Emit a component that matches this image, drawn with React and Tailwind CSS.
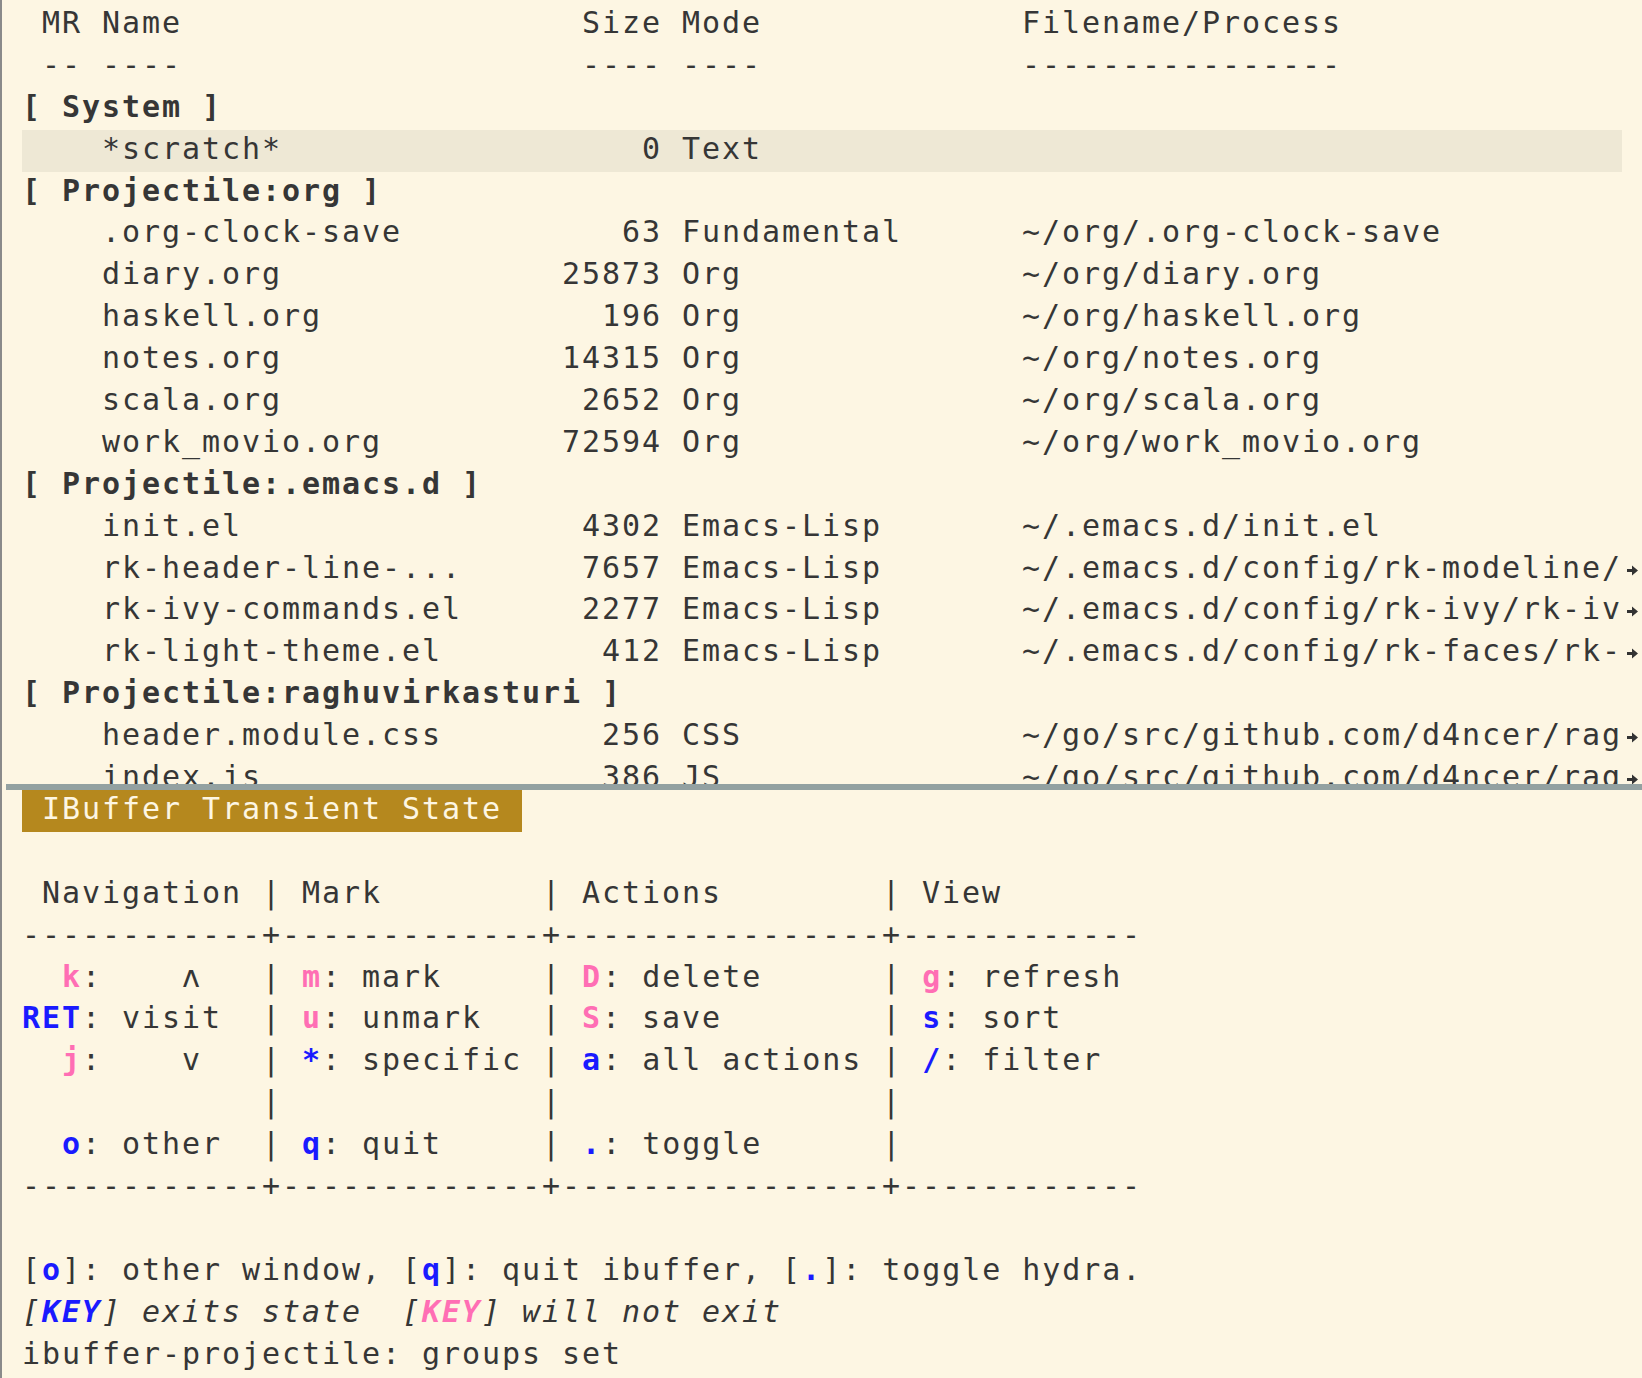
import React from 'react';

const header = ' MR Name'.padEnd(28) + 'Size ' + 'Mode'.padEnd(17) + 'Filename/Process';
const rule = ' -- ----'.padEnd(28) + '---- ' + '----'.padEnd(17) + '----------------';

const bufLine = (name, size, mode, file) =>
  ('    ' + name).padEnd(27) + size.padStart(5) + ' ' + mode.padEnd(17) + file;

const groups = [
  {
    title: 'System',
    rows: [['*scratch*', '0', 'Text', '', false, true]],
  },
  {
    title: 'Projectile:org',
    rows: [
      ['.org-clock-save', '63', 'Fundamental', '~/org/.org-clock-save'],
      ['diary.org', '25873', 'Org', '~/org/diary.org'],
      ['haskell.org', '196', 'Org', '~/org/haskell.org'],
      ['notes.org', '14315', 'Org', '~/org/notes.org'],
      ['scala.org', '2652', 'Org', '~/org/scala.org'],
      ['work_movio.org', '72594', 'Org', '~/org/work_movio.org'],
    ],
  },
  {
    title: 'Projectile:.emacs.d',
    rows: [
      ['init.el', '4302', 'Emacs-Lisp', '~/.emacs.d/init.el'],
      ['rk-header-line-...', '7657', 'Emacs-Lisp', '~/.emacs.d/config/rk-modeline/', true],
      ['rk-ivy-commands.el', '2277', 'Emacs-Lisp', '~/.emacs.d/config/rk-ivy/rk-iv', true],
      ['rk-light-theme.el', '412', 'Emacs-Lisp', '~/.emacs.d/config/rk-faces/rk-', true],
    ],
  },
  {
    title: 'Projectile:raghuvirkasturi',
    rows: [
      ['header.module.css', '256', 'CSS', '~/go/src/github.com/d4ncer/rag', true],
      ['index.js', '386', 'JS', '~/go/src/github.com/d4ncer/rag', true],
    ],
  },
];

// truncation marker drawn in the right fringe
const Arrow = () => (
  <svg width="11" height="11" viewBox="0 0 11 11" className="mt-[1px]">
    <path d="M0 4h5V0.5l6 5-6 5V7H0z" fill="#333333" />
  </svg>
);

const Row = ({ children, hl, arrow }) => (
  <div className="flex h-[41.9px] leading-[37.9px]">
    <div className="w-[20px] shrink-0" />
    <div className={hl ? 'w-[1600px] shrink-0 overflow-hidden whitespace-pre bg-[#eee8d5]' : 'w-[1600px] shrink-0 overflow-hidden whitespace-pre'}>
      {children}
    </div>
    <div className="w-[20px] shrink-0 flex items-center justify-center">{arrow && <Arrow />}</div>
  </div>
);

const P = ({ c }) => <span className="font-bold text-[#ff6eb4]">{c}</span>;
const B = ({ c }) => <span className="font-bold text-[#1a1aff]">{c}</span>;

export default function App() {
  return (
    <div
      className="w-[1642px] h-[1378px] overflow-hidden bg-[#fdf6e3] text-[#363636] border-l-2 border-[#8a8a8a] text-[30px] tracking-[1.94px]"
      style={{ fontFamily: '"DejaVu Sans Mono", "Liberation Mono", monospace' }}
    >
      {/* ibuffer window */}
      <div className="h-[784px] overflow-hidden pt-[4px]">
        <Row>{header}</Row>
        <Row>{rule}</Row>
        {groups.map((g) => (
          <React.Fragment key={g.title}>
            <Row>
              <span className="font-bold">{'[ ' + g.title + ' ]'}</span>
            </Row>
            {g.rows.map(([n, s, m, f, arrow, hl]) => (
              <Row key={n} hl={hl} arrow={arrow}>
                {bufLine(n, s, m, f)}
              </Row>
            ))}
          </React.Fragment>
        ))}
      </div>

      {/* window divider */}
      <div className="h-[6px] ml-[4px] bg-[#93a1a1]" />

      {/* hydra */}
      <div>
        <Row>
          <span className="inline-block h-[43px] align-top bg-[#b5881e] text-[#fdf6e3]"> IBuffer Transient State </span>
        </Row>
        <Row />
        <Row>{' Navigation | Mark        | Actions        | View'}</Row>
        <Row>{'------------+-------------+----------------+------------'}</Row>
        <Row>
          {'  '}<P c="k" />{':    ʌ   | '}<P c="m" />{': mark     | '}<P c="D" />{': delete      | '}<P c="g" />{': refresh'}
        </Row>
        <Row>
          <B c="RET" />{': visit  | '}<P c="u" />{': unmark   | '}<P c="S" />{': save        | '}<B c="s" />{': sort'}
        </Row>
        <Row>
          {'  '}<P c="j" />{':    v   | '}<B c="*" />{': specific | '}<B c="a" />{': all actions | '}<B c="/" />{': filter'}
        </Row>
        <Row>{'            |             |                |'}</Row>
        <Row>
          {'  '}<B c="o" />{': other  | '}<B c="q" />{': quit     | '}<B c="." />{': toggle      |'}
        </Row>
        <Row>{'------------+-------------+----------------+------------'}</Row>
        <Row />
        <Row>
          {'['}<B c="o" />{']: other window, ['}<B c="q" />{']: quit ibuffer, ['}<B c="." />{']: toggle hydra.'}
        </Row>
        <Row>
          <span className="italic">
            {'['}<B c="KEY" />{'] exits state  ['}<P c="KEY" />{'] will not exit'}
          </span>
        </Row>
        <Row>{'ibuffer-projectile: groups set'}</Row>
      </div>
    </div>
  );
}
